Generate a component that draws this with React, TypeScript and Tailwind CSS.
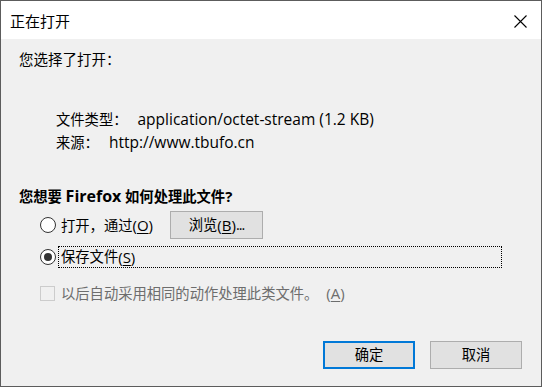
const font = {
  fontFamily: '"Open Sans", "Noto Sans CJK SC", sans-serif',
};

const Radio = ({ checked }: { checked?: boolean }) => (
  <span className="w-[16px] h-[16px] rounded-full border border-[#333333] bg-white flex items-center justify-center shrink-0">
    {checked && <span className="w-[8px] h-[8px] rounded-full bg-[#333333]" />}
  </span>
);

const Key = ({ k, className }: { k: string; className?: string }) => (
  <span className={`text-[15px] ${className ?? ""}`}>
    (<span className="underline underline-offset-2">{k}</span>)
  </span>
);

const App = () => {
  return (
    <div
      className="w-[542px] h-[387px] bg-[#f0f0f0] border border-[#5c5c5c] flex flex-col text-[14.3px] text-black"
      style={font}
    >
      <div className="h-[38px] bg-white flex items-center justify-between pl-[9px] pr-[14px] pt-[2px]">
        <span className="text-[15px]">正在打开</span>
        <svg width="13" height="13" viewBox="0 0 13 13">
          <path d="M0.5 0.5 L12.5 12.5 M12.5 0.5 L0.5 12.5" stroke="#000" strokeWidth="1.1" />
        </svg>
      </div>

      <div className="flex-1 flex flex-col pl-[18px] pr-[19px] pb-[17px]">
        <p className="mt-[11px] leading-[20px] text-[14.5px]">您选择了打开：</p>

        <div className="mt-[38px] pl-[37px] leading-[22px]">
          <p>
            文件类型：<span className="ml-[10px] text-[15.5px]">application/octet-stream (1.2 KB)</span>
          </p>
          <p>
            来源：<span className="ml-[10px] text-[15.5px]">http://www.tbufo.cn</span>
          </p>
        </div>

        <p className="mt-[32px] leading-[20px] font-bold">
          您想要 <span className="text-[16px]">Firefox</span> 如何处理此文件<span className="text-[15px]">?</span>
        </p>

        <div className="mt-[4px] h-[28px] flex items-center pl-[21px]">
          <Radio />
          <span className="ml-[5px]">
            打开，通过<Key k="O" />
          </span>
          <button className="ml-auto mr-[259px] w-[93px] h-[28px] bg-[#e1e1e1] border border-[#adadad] flex items-center justify-center">
            浏览<Key k="B" />
            <span className="tracking-[-1px]">...</span>
          </button>
        </div>

        <div className="mt-[7px] flex items-center pl-[21px]">
          <Radio checked />
          <span className="ml-[2px] w-[444px] h-[22px] border border-dotted border-black flex items-center pl-[2px]">
            保存文件<Key k="S" />
          </span>
        </div>

        <div className="mt-[14px] h-[22px] flex items-center pl-[21px] text-[#6d6d6d]">
          <span className="w-[15px] h-[15px] border border-[#cccccc] bg-[#f0f0f0] shrink-0" />
          <span className="ml-[6px]">
            以后自动采用相同的动作处理此类文件。<Key k="A" className="ml-[8px]" />
          </span>
        </div>

        <div className="mt-auto flex justify-end gap-[15px]">
          <button className="w-[92px] h-[28px] bg-[#e1e1e1] border-2 border-[#0078d7]">确定</button>
          <button className="w-[92px] h-[28px] bg-[#e1e1e1] border border-[#adadad]">取消</button>
        </div>
      </div>
    </div>
  );
};

export default App;
